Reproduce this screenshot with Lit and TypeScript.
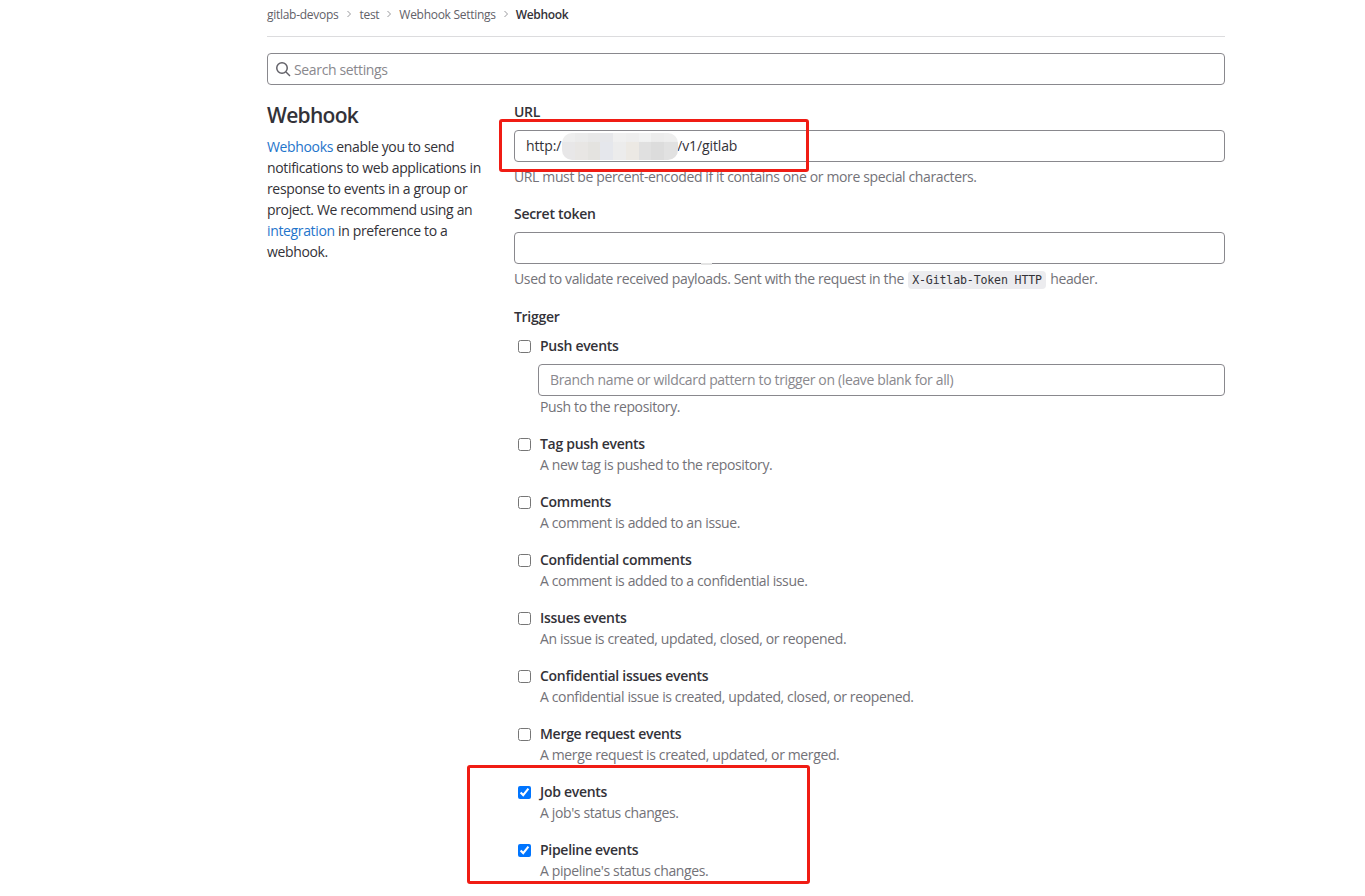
import { LitElement, html, css } from "lit";
import { customElement } from "lit/decorators.js";

const FONT = css`"Open Sans", "Noto Sans", "Liberation Sans", sans-serif`;

const events = [
  ["Tag push events", "A new tag is pushed to the repository.", false],
  ["Comments", "A comment is added to an issue.", false],
  ["Confidential comments", "A comment is added to a confidential issue.", false],
  ["Issues events", "An issue is created, updated, closed, or reopened.", false],
  ["Confidential issues events", "A confidential issue is created, updated, closed, or reopened.", false],
  ["Merge request events", "A merge request is created, updated, or merged.", false],
  ["Job events", "A job's status changes.", true],
  ["Pipeline events", "A pipeline's status changes.", true],
] as const;

@customElement("app-root")
export class AppRoot extends LitElement {
  static styles = css`
    :host {
      display: block;
      position: relative;
      height: 896px;
      overflow: hidden;
      background: #fff;
      color: #333238;
      font-family: ${FONT};
      font-size: 14px;
      line-height: 21px;
      letter-spacing: -0.35px;
    }
    .page { width: 958px; margin-left: 267px; }
    .crumbs {
      display: flex;
      align-items: center;
      box-sizing: border-box;
      height: 37px;
      padding-bottom: 8px;
      border-bottom: 1px solid #dcdcde;
      font-size: 12px;
      color: #626168;
      letter-spacing: -0.28px;
    }
    .crumbs span:first-child { margin-right: 1px; }
    .crumbs b { font-weight: 600; color: #333238; letter-spacing: -0.35px; }
    .crumbs svg { width: 8px; height: 8px; margin: 0 6px 1px 6px; color: #9a9a9e; flex: none; }
    .field {
      display: flex;
      align-items: center;
      box-sizing: border-box;
      height: 32px;
      border: 1px solid #89888d;
      border-radius: 4px;
      padding: 0 11px 2px;
      background: #fff;
    }
    .search { margin-top: 16px; padding: 0 7px; color: #89888d; gap: 3px; }
    .search svg { width: 16px; height: 16px; color: #626168; flex: none; }
    .cols { display: grid; grid-template-columns: 247px 1fr; margin-top: 16px; }
    h2 { margin: -1px 0 0; font-size: 21px; font-weight: 600; line-height: 30px; color: #333238; letter-spacing: -0.7px; }
    .side p { margin: 6px 0 0; width: 220px; color: #333238; }
    a { color: #1f75cb; text-decoration: none; }
    .label { font-weight: 600; color: #333238; letter-spacing: -0.29px; }
    .help { color: #737278; letter-spacing: -0.37px; }
    .main > .label { display: block; margin-bottom: 8px; }
    .field-help { margin-top: 4px; }
    .main > .secret { margin-top: 16px; }
    .main > .trigger { margin-top: 17px; margin-bottom: 9px; }
    .url { white-space: pre; color: #333238; letter-spacing: -0.12px; }
    .blur {
      width: 116px;
      height: 27px;
      margin: 2px -1px 0 1px;
      border-radius: 10px;
      flex: none;
      filter: blur(0.6px);
      background:
        linear-gradient(90deg,
          #eeeeee 0 11%, #ebebeb 11% 22%, #e8e8e8 22% 33%, #e6e7ea 33% 44%,
          #f0f0f0 44% 55%, #eeeeee 55% 66%, #f1f2f2 66% 77%, #ececec 77% 88%, #eeeeee 88% 100%) top / 100% 33% no-repeat,
        linear-gradient(90deg,
          #e8e7e8 0 11%, #e8e6e4 11% 22%, #e4e3e0 22% 33%, #e5e7ec 33% 44%,
          #ececec 44% 55%, #ece9e4 55% 66%, #e0e0e0 66% 77%, #dcdcdc 77% 88%, #e1e1e1 88% 100%);
    }
    code {
      font-family: "DejaVu Sans Mono", "Liberation Mono", monospace;
      font-size: 11.6px;
      line-height: 1;
      letter-spacing: -0.15px;
      background: #ececef;
      color: #333238;
      border-radius: 4px;
      padding: 2px 4px;
      margin: 0 1px;
    }
    .notch { position: absolute; left: 701px; top: 263px; width: 11px; height: 2px; background: #e4e4e4; }
    .check { display: grid; grid-template-columns: 13px 1fr; column-gap: 9px; padding-left: 4px; margin-bottom: 16px; }
    .check input { margin: 4px 0 0; width: 13px; height: 13px; }
    .check .label { margin: -1px 0 1px; }
    .check > .help { grid-column: 2; margin: -1px 0 1px; }
    .check .body { grid-column: 2; }
    .check .field { margin: 7px 0 0 -2px; color: #89888d; }
    .check .body .help { margin: 0 0 1px; }
    .mark { position: absolute; border: 3px solid #f01c14; border-radius: 3px; box-sizing: border-box; pointer-events: none; }
    .mark.a { left: 499px; top: 119px; width: 310px; height: 53px; }
    .mark.b { left: 467px; top: 765px; width: 343px; height: 119px; }
  `;

  render() {
    const chev = html`<svg viewBox="0 0 8 8" fill="none" stroke="currentColor" stroke-width="1"><path d="M2.5 1l3 3-3 3"/></svg>`;
    return html`
      <div class="page">
        <nav class="crumbs">
          <span>gitlab-devops</span>${chev}<span>test</span>${chev}<span>Webhook Settings</span>${chev}<b>Webhook</b>
        </nav>
        <div class="field search">
          <svg viewBox="0 0 16 16" fill="none" stroke="currentColor" stroke-width="1.5"><circle cx="7" cy="7" r="5.25"/><path d="M11 11l4 4"/></svg>
          <span>Search settings</span>
        </div>
        <div class="cols">
          <div class="side">
            <h2>Webhook</h2>
            <p><a href="#">Webhooks</a> enable you to send notifications to web applications in response to events in a group or project. We recommend using an <a href="#">integration</a> in preference to a webhook.</p>
          </div>
          <div class="main">
            <span class="label">URL</span>
            <div class="field url"><span>http:/</span><span class="blur"></span><span>/v1/gitlab</span></div>
            <div class="help field-help">URL must be percent-encoded if it contains one or more special characters.</div>
            <span class="label secret">Secret token</span>
            <div class="field"></div>
            <div class="help field-help">Used to validate received payloads. Sent with the request in the <code>X-Gitlab-Token HTTP</code> header.</div>
            <span class="label trigger">Trigger</span>
            <div class="check">
              <input type="checkbox" />
              <div class="label">Push events</div>
              <div class="body">
                <div class="field">Branch name or wildcard pattern to trigger on (leave blank for all)</div>
                <div class="help">Push to the repository.</div>
              </div>
            </div>
            ${events.map(
              ([name, help, on]) => html`
                <div class="check">
                  <input type="checkbox" .checked=${on} />
                  <div class="label">${name}</div>
                  <div class="help">${help}</div>
                </div>
              `
            )}
          </div>
        </div>
      </div>
      <div class="notch"></div>
      <div class="mark a"></div>
      <div class="mark b"></div>
    `;
  }
}
